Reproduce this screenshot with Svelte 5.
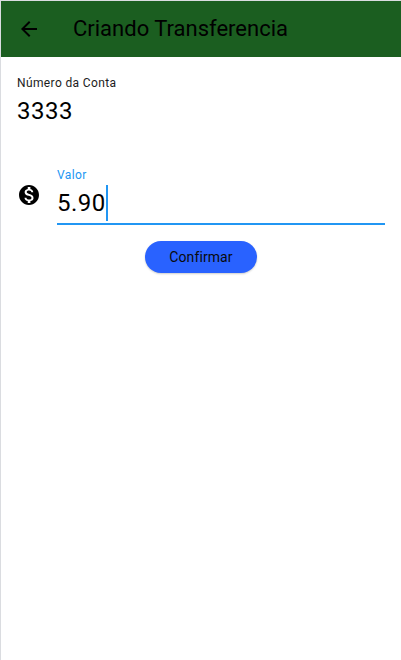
<script>
  let account = '3333';
  let amount = '5.90';
</script>

<div class="screen">
  <header>
    <svg width="24" height="24" viewBox="0 0 24 24" aria-label="Voltar"><path d="M20 11H7.83l5.59-5.59L12 4l-8 8 8 8 1.41-1.41L7.83 13H20v-2z"/></svg>
    <h1>Criando Transferencia</h1>
  </header>
  <main>
    <div class="field">
      <div class="label"><span>Número da Conta</span></div>
      <div class="value">{account}</div>
    </div>
    <div class="row">
      <svg width="24" height="24" viewBox="0 0 24 24"><path d="M12 2C6.48 2 2 6.48 2 12s4.480 10 10 10 10-4.480 10-10S17.520 2 12 2zm1.410 16.090V20h-2.670v-1.930c-1.710-.36-3.160-1.460-3.270-3.400h1.960c.1 1.050.82 1.870 2.650 1.870 1.960 0 2.400-.98 2.400-1.590 0-.83-.44-1.610-2.670-2.140-2.480-.6-4.180-1.620-4.180-3.670 0-1.720 1.390-2.840 3.110-3.210V4h2.670v1.950c1.860.45 2.790 1.860 2.850 3.390H14.300c-.05-1.110-.64-1.870-2.220-1.870-1.500 0-2.400.68-2.400 1.640 0 .84.65 1.390 2.670 1.910s4.180 1.390 4.180 3.910c-.01 1.830-1.380 2.830-3.120 3.160z"/></svg>
      <div class="field active">
        <div class="label"><span>Valor</span></div>
        <div class="value">{amount}<span class="caret"></span></div>
      </div>
    </div>
    <button>Confirmar</button>
  </main>
</div>

<style>
  .screen {
    box-sizing: border-box;
    height: 660px;
    border-left: 1px solid #dadce0;
    border-top: 1px solid #dadce0;
    background: #fff;
    font-family: Roboto, sans-serif;
    color: #000;
    overflow: hidden;
  }
  header {
    display: flex;
    align-items: center;
    gap: 32px;
    height: 56px;
    padding-left: 16px;
    background: #1b5e20;
  }
  svg { display: block; flex: none; }
  h1 {
    margin: 0;
    font-size: 22px;
    line-height: 28px;
    font-weight: 400;
    white-space: nowrap;
  }
  main {
    display: flex;
    flex-direction: column;
    padding: 16px;
  }
  .label {
    height: 20px;
    color: #1c1c1c;
  }
  /* floating label: body text shrunk to three quarters */
  .label span {
    display: inline-block;
    font-size: 16px;
    line-height: 26px;
    letter-spacing: 0.5px;
    white-space: nowrap;
    transform: scale(0.75);
    transform-origin: 0 0;
  }
  .value {
    display: flex;
    align-items: center;
    height: 36px;
    font-size: 24px;
    letter-spacing: 0.5px;
  }
  .row {
    display: flex;
    align-items: center;
    gap: 16px;
    margin-top: 36px;
  }
  .active {
    flex: 1;
    padding-bottom: 2px;
    border-bottom: 2px solid #2196f3;
  }
  .active .label { color: #2196f3; }
  .caret {
    width: 2px;
    height: 36px;
    background: #2196f3;
  }
  button {
    align-self: center;
    width: 111.5px;
    height: 32px;
    margin-top: 16px;
    padding: 0;
    border: 0;
    border-radius: 16px;
    background: #2962ff;
    color: #0a0a0a;
    font-family: Roboto, sans-serif;
    font-size: 14px;
    font-weight: 400;
    letter-spacing: 0.1px;
    box-shadow: 0 1px 2px rgba(0, 0, 0, 0.2);
  }
</style>
